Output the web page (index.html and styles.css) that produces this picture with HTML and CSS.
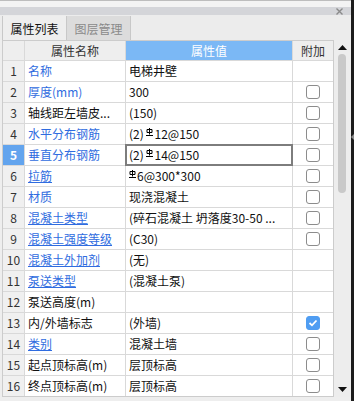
FILE: index.html
```html
<!DOCTYPE html>
<html>
<head>
<meta charset="utf-8">
<link rel="stylesheet" href="styles.css">
</head>
<body>
<div class="win">
  <div class="panel">
    <div class="topline"></div>
    <div class="gap"></div>
    <div class="titlebar">
      <svg class="close" width="7" height="7" viewBox="0 0 7 7"><path d="M0.5 0.5L6.5 6.5M6.5 0.5L0.5 6.5" stroke="#8a8a8a" stroke-width="1.4"/></svg>
    </div>
    <div class="tabs">
      <div class="tab active">属性列表</div>
      <div class="tab">图层管理</div>
    </div>
    <div class="body">
      <div class="grid">
        <div class="c hd"></div>
        <div class="c hd center">属性名称</div>
        <div class="c hd center blue">属性值</div>
        <div class="c hd center">附加</div>

        <div class="c num">1</div><div class="c name link">名称</div><div class="c val">电梯井壁</div><div class="c chk"></div>
        <div class="c num">2</div><div class="c name link">厚度(mm)</div><div class="c val">300</div><div class="c chk"><span class="cb"></span></div>
        <div class="c num">3</div><div class="c name">轴线距左墙皮...</div><div class="c val">(150)</div><div class="c chk"><span class="cb"></span></div>
        <div class="c num">4</div><div class="c name link">水平分布钢筋</div><div class="c val"><span>(2) <svg class="rb" width="7" height="8" viewBox="0 0 7 8"><path d="M3.5 0V6.5M1 1.5h5v3H1zM0 7.5h7" stroke="#000" fill="none" stroke-width="1"/></svg>12@150</span></div><div class="c chk"><span class="cb"></span></div>
        <div class="c num sel">5</div><div class="c name link">垂直分布钢筋</div><div class="c val edit"><span>(2) <svg class="rb" width="7" height="8" viewBox="0 0 7 8"><path d="M3.5 0V6.5M1 1.5h5v3H1zM0 7.5h7" stroke="#000" fill="none" stroke-width="1"/></svg>14@150</span></div><div class="c chk"><span class="cb"></span></div>
        <div class="c num">6</div><div class="c name link u">拉筋</div><div class="c val"><span><svg class="rb" width="7" height="8" viewBox="0 0 7 8"><path d="M3.5 0V6.5M1 1.5h5v3H1zM0 7.5h7" stroke="#000" fill="none" stroke-width="1"/></svg>6@300*300</span></div><div class="c chk"><span class="cb"></span></div>
        <div class="c num">7</div><div class="c name link">材质</div><div class="c val">现浇混凝土</div><div class="c chk"><span class="cb"></span></div>
        <div class="c num">8</div><div class="c name link u">混凝土类型</div><div class="c val">(碎石混凝土 坍落度30-50 ...</div><div class="c chk"><span class="cb"></span></div>
        <div class="c num">9</div><div class="c name link u">混凝土强度等级</div><div class="c val">(C30)</div><div class="c chk"><span class="cb"></span></div>
        <div class="c num">10</div><div class="c name link u">混凝土外加剂</div><div class="c val">(无)</div><div class="c chk"></div>
        <div class="c num">11</div><div class="c name link u">泵送类型</div><div class="c val">(混凝土泵)</div><div class="c chk"></div>
        <div class="c num">12</div><div class="c name">泵送高度(m)</div><div class="c val"></div><div class="c chk"></div>
        <div class="c num">13</div><div class="c name">内/外墙标志</div><div class="c val">(外墙)</div><div class="c chk"><span class="cb on"><svg width="10" height="8" viewBox="0 0 10 8"><path d="M1.5 4L4 6.3L8.5 1.5" stroke="#fff" stroke-width="1.8" fill="none"/></svg></span></div>
        <div class="c num">14</div><div class="c name link u">类别</div><div class="c val">混凝土墙</div><div class="c chk"><span class="cb"></span></div>
        <div class="c num">15</div><div class="c name">起点顶标高(m)</div><div class="c val">层顶标高</div><div class="c chk"><span class="cb"></span></div>
        <div class="c num">16</div><div class="c name">终点顶标高(m)</div><div class="c val">层顶标高</div><div class="c chk"><span class="cb"></span></div>
      </div>
      <div class="scroll">
        <div class="arrow up"><svg width="9" height="5" viewBox="0 0 9 5"><path d="M0 5L4.5 0L9 5Z" fill="#111"/></svg></div>
        <div class="thumb"></div>
        <div class="spacer"></div>
        <div class="arrow down"><svg width="9" height="5" viewBox="0 0 9 5"><path d="M0 0L4.5 5L9 0Z" fill="#111"/></svg></div>
      </div>
    </div>
  </div>
  <div class="edge"></div>
</div>
</body>
</html>
```

FILE: styles.css
```css
html, body {
  margin: 0;
  padding: 0;
}
body {
  width: 354px;
  height: 401px;
  overflow: hidden;
  background: #eeeeee;
  font-family: "Noto Sans CJK SC", "Microsoft YaHei", sans-serif;
  font-size: 12px;
  color: #111;
}
.win {
  display: flex;
  height: 401px;
}
.panel {
  width: 351px;
  display: flex;
  flex-direction: column;
}
.edge {
  width: 3px;
  background: #1c1c1c;
  position: relative;
}
.edge::after {
  content: "";
  position: absolute;
  left: 0;
  top: 134px;
  border-top: 3px solid transparent;
  border-bottom: 3px solid transparent;
  border-right: 3px solid #8a8a8a;
}
.topline {
  height: 1px;
  background: #bdbdbd;
}
.gap {
  height: 6px;
  background: #f3f3f3;
}
.titlebar {
  height: 8px;
  background: #d4d5d9;
  display: flex;
  justify-content: flex-end;
  align-items: center;
  padding-right: 8px;
}
.tabs {
  height: 25px;
  box-sizing: border-box;
  padding: 1px 0 0 2px;
  display: flex;
  background: #ececec;
}
.tab {
  width: 63px;
  height: 24px;
  border-right: 1px solid #c8c8c8;
  display: flex;
  align-items: center;
  justify-content: center;
  background: #dcdcdc;
  color: #8a8a8a;
}
.tab.active {
  border-left: 1px solid #c8c8c8;
  background: #eeeeee;
  color: #111;
}
.body {
  display: flex;
  padding-left: 2px;
  align-items: flex-start;
}
.grid {
  display: grid;
  grid-template-columns: 21px 100px 166px 40px;
  grid-template-rows: 19px;
  grid-auto-rows: 20px;
  gap: 1px;
  background: #d9d9d9;
  border: 1px solid #cccccc;
}
.c {
  background: #fff;
  display: flex;
  align-items: center;
  white-space: nowrap;
  overflow: hidden;
  line-height: 16px;
}
.hd {
  background: #eeeeee;
  color: #333;
}
.center {
  justify-content: center;
}
.hd.blue {
  background: #7bb8f5;
  color: #fff;
}
.num {
  background: #f0f0f0;
  color: #333;
  justify-content: center;
}
.num.sel {
  background: #62a4ee;
  color: #fff;
  font-weight: bold;
}
.name {
  padding-left: 3px;
}
.link {
  color: #2f6ce0;
}
.u {
  text-decoration: underline;
  text-underline-offset: 1px;
}
.val {
  padding-left: 3px;
}
.val.edit {
  position: relative;
  z-index: 1;
  outline: 2px solid #7d7d7d;
  outline-offset: -1px;
  overflow: visible;
}
.rb {
  vertical-align: 3px;
  margin-right: 1px;
}
.chk {
  justify-content: center;
}
.cb {
  width: 14px;
  height: 14px;
  box-sizing: border-box;
  border: 1px solid #8c8c8c;
  border-radius: 3px;
  background: #fff;
  display: flex;
  align-items: center;
  justify-content: center;
}
.cb.on {
  background: #4f9df2;
  border-color: #4f9df2;
}
.scroll {
  width: 17px;
  height: 357px;
  background: #ededed;
  display: flex;
  flex-direction: column;
  align-items: center;
}
.arrow {
  height: 14px;
  width: 100%;
  display: flex;
  align-items: center;
  justify-content: center;
}
.arrow.down {
  height: 16px;
}
.thumb {
  width: 8px;
  height: 139px;
  background: #c9c9c9;
  border-radius: 4px;
  margin-right: 1px;
}
.spacer {
  flex: 1;
}
```
